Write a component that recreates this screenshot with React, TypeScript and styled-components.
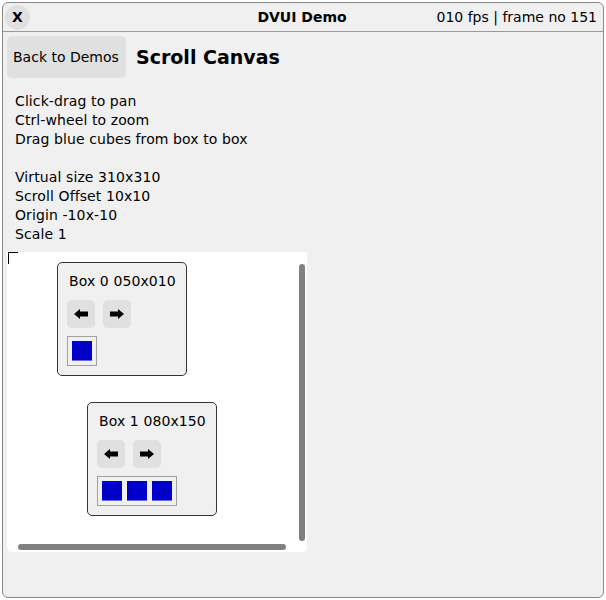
import React from "react";
import styled, { createGlobalStyle } from "styled-components";

const Global = createGlobalStyle`
  html, body { margin: 0; padding: 0; background: #ffffff; }
  body { font-family: "DejaVu Sans", "Liberation Sans", sans-serif; color: #000; }
`;

const Window = styled.div`
  margin: 2px;
  width: 600px;
  height: 594px;
  border: 1px solid #888;
  border-radius: 6px;
  background: #f0f0f0;
  display: flex;
  flex-direction: column;
  overflow: hidden;
`;

const TitleBar = styled.div`
  height: 28px;
  border-bottom: 1px solid #999;
  display: grid;
  grid-template-columns: 1fr auto 1fr;
  align-items: center;
  padding: 0 6px 0 2px;
`;

const CloseBtn = styled.div`
  width: 25px;
  height: 25px;
  border-radius: 50%;
  background: #e0e0e0;
  display: flex;
  align-items: center;
  justify-content: center;
  font-weight: bold;
  font-size: 14px;
  justify-self: start;
`;

const Title = styled.div`
  font-weight: bold;
  font-size: 14px;
  padding-left: 2px;
`;

const Fps = styled.div`
  justify-self: end;
  font-size: 14px;
`;

const Content = styled.div`
  padding: 4px;
  display: flex;
  flex-direction: column;
`;

const HeaderRow = styled.div`
  display: flex;
  align-items: center;
  gap: 10px;
`;

const BackButton = styled.div`
  height: 42px;
  padding: 0 6px;
  min-width: 107px;
  border-radius: 5px;
  background: #e0e0e0;
  display: flex;
  align-items: center;
  font-size: 14px;
`;

const Heading = styled.div`
  font-weight: bold;
  font-size: 19px;
`;

const Info = styled.div`
  margin: 14px 0 8px 8px;
  font-size: 14px;
  line-height: 19px;
  letter-spacing: 0.1px;
  white-space: pre;
`;

const Canvas = styled.div`
  position: relative;
  width: 300px;
  height: 300px;
  background: #fff;
  border-radius: 0 0 5px 5px;
  overflow: hidden;
`;

const OriginMark = styled.div`
  position: absolute;
  left: 1px;
  top: 0px;
  width: 9px;
  height: 11px;
  border-top: 1px solid #000;
  border-left: 1px solid #000;
`;

const VScroll = styled.div`
  position: absolute;
  left: 292px;
  top: 12px;
  width: 6px;
  height: 277px;
  border-radius: 3px;
  background: #808080;
`;

const HScroll = styled.div`
  position: absolute;
  left: 11px;
  top: 292px;
  width: 268px;
  height: 6px;
  border-radius: 3px;
  background: #808080;
`;

const Box = styled.div<{ $x: number; $y: number }>`
  position: absolute;
  left: ${(p) => p.$x}px;
  top: ${(p) => p.$y}px;
  width: 130px;
  height: 114px;
  box-sizing: border-box;
  border: 1px solid #333;
  border-radius: 5px;
  background: #f0f0f0;
  padding: 9px 9px;
  display: flex;
  flex-direction: column;
  align-items: flex-start;
`;

const BoxTitle = styled.div`
  font-size: 14px;
  line-height: 19px;
  letter-spacing: 0.1px;
  padding-left: 2px;
`;

const ArrowRow = styled.div`
  display: flex;
  gap: 8px;
  margin-top: 9px;
`;

const ArrowBtn = styled.div`
  width: 28px;
  height: 28px;
  border-radius: 5px;
  background: #e0e0e0;
  display: flex;
  align-items: center;
  justify-content: center;
`;

const CubeTray = styled.div`
  margin-top: 8px;
  border: 1px solid #a0a0a0;
  padding: 4px;
  display: flex;
  gap: 5px;
`;

const Cube = styled.div`
  width: 20px;
  height: 20px;
  background: #0000c8;
  box-shadow: inset 0 -1px 0 #6868e8;
`;

const Arrow = ({ dir }: { dir: "left" | "right" }) => (
  <svg width="14" height="10" viewBox="0 0 14 10">
    <polygon
      points="0,5 6,0 6,2.5 14,2.5 14,7.5 6,7.5 6,10"
      fill="#000"
      transform={dir === "right" ? "translate(14,0) scale(-1,1)" : undefined}
    />
  </svg>
);

const CubeBox = ({ x, y, label, cubes }: { x: number; y: number; label: string; cubes: number }) => (
  <Box $x={x} $y={y}>
    <BoxTitle>{label}</BoxTitle>
    <ArrowRow>
      <ArrowBtn>
        <Arrow dir="left" />
      </ArrowBtn>
      <ArrowBtn>
        <Arrow dir="right" />
      </ArrowBtn>
    </ArrowRow>
    <CubeTray>
      {Array.from({ length: cubes }).map((_, i) => (
        <Cube key={i} />
      ))}
    </CubeTray>
  </Box>
);

export default function App() {
  return (
    <>
      <Global />
      <Window>
        <TitleBar>
          <CloseBtn>X</CloseBtn>
          <Title>DVUI Demo</Title>
          <Fps>010 fps | frame no 151</Fps>
        </TitleBar>
        <Content>
          <HeaderRow>
            <BackButton>Back to Demos</BackButton>
            <Heading>Scroll Canvas</Heading>
          </HeaderRow>
          <Info>
            {"Click-drag to pan\nCtrl-wheel to zoom\nDrag blue cubes from box to box\n\nVirtual size 310x310\nScroll Offset 10x10\nOrigin -10x-10\nScale 1"}
          </Info>
          <Canvas>
            <OriginMark />
            <CubeBox x={50} y={10} label="Box 0 050x010" cubes={1} />
            <CubeBox x={80} y={150} label="Box 1 080x150" cubes={3} />
            <VScroll />
            <HScroll />
          </Canvas>
        </Content>
      </Window>
    </>
  );
}
